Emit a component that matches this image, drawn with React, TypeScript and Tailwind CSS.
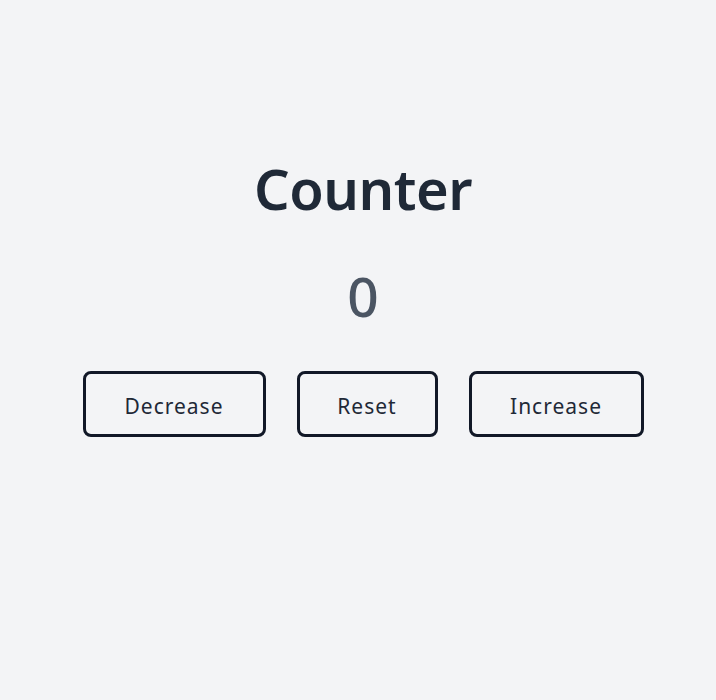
export default function App() {
  return (
    <div className="min-h-screen bg-[#f3f4f6] flex flex-col items-center pt-[158px] pl-[10px]" style={{ fontFamily: '"Noto Sans", "Open Sans", sans-serif' }}>
      <h1 className="text-[56px] leading-[60px] font-semibold tracking-[-0.5px] text-[#1f2937]">Counter</h1>
      <div className="mt-[48px] text-[55px] leading-[60px] font-medium text-[#4b5563]">0</div>
      <div className="mt-[45px] flex gap-[31px]">
        <button className="h-[66px] w-[183px] rounded-lg border-[3px] border-[#111827] pt-[5px] text-[21px] tracking-[1px] text-[#1f2937]">Decrease</button>
        <button className="h-[66px] w-[141px] rounded-lg border-[3px] border-[#111827] pt-[5px] text-[21px] tracking-[1px] text-[#1f2937]">Reset</button>
        <button className="h-[66px] w-[175px] rounded-lg border-[3px] border-[#111827] pt-[5px] text-[21px] tracking-[1px] text-[#1f2937]">Increase</button>
      </div>
    </div>
  );
}
